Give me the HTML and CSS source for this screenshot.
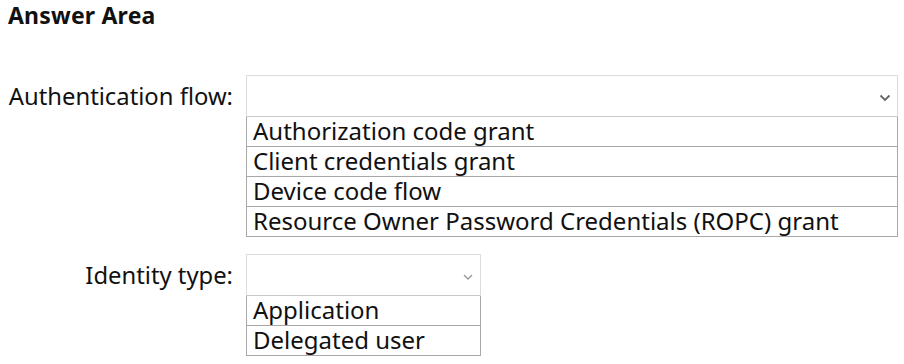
FILE: index.html
```html
<!DOCTYPE html>
<html lang="en">
<head>
  <meta charset="UTF-8">
  <title>Answer Area</title>
  <link rel="stylesheet" href="styles.css">
</head>
<body>
  <h1>Answer Area</h1>

  <div class="row row-flow">
    <div class="label">Authentication flow:</div>
    <div class="dropdown wide">
      <div class="head">
        <svg class="chevron" width="12" height="8" viewBox="0 0 12 8"><path d="M1.5 1.5 L6 6 L10.5 1.5" fill="none" stroke="#666" stroke-width="1.8"/></svg>
      </div>
      <ul class="options">
        <li>Authorization code grant</li>
        <li>Client credentials grant</li>
        <li>Device code flow</li>
        <li>Resource Owner Password Credentials (ROPC) grant</li>
      </ul>
    </div>
  </div>

  <div class="row row-identity">
    <div class="label">Identity type:</div>
    <div class="dropdown narrow">
      <div class="head">
        <svg class="chevron" width="12" height="8" viewBox="0 0 12 8"><path d="M2 2 L6 6 L10 2" fill="none" stroke="#999" stroke-width="1.3"/></svg>
      </div>
      <ul class="options">
        <li>Application</li>
        <li>Delegated user</li>
      </ul>
    </div>
  </div>
</body>
</html>
```

FILE: styles.css
```css
body {
  margin: 0;
  padding: 0 0 0 8px;
  background: #fff;
  font-family: "Noto Sans", "Open Sans", sans-serif;
  color: #111;
}
h1 {
  font-size: 23px;
  font-weight: bold;
  margin: 0;
  line-height: 31px;
  letter-spacing: 0.2px;
}
.row {
  display: flex;
  align-items: flex-start;
}
.row-flow {
  margin-top: 44px;
}
.row-identity {
  margin-top: 17px;
}
.label {
  width: 225px;
  text-align: right;
  font-size: 23.8px;
  line-height: 42px;
  margin-right: 13px;
  white-space: nowrap;
}
.dropdown {
  display: flex;
  flex-direction: column;
}
.wide {
  width: 652px;
}
.narrow {
  width: 235px;
}
.head {
  height: 40px;
  border: 1px solid #dcdcdc;
  border-bottom-color: #c8c8c8;
  display: flex;
  align-items: center;
  justify-content: flex-end;
  padding-right: 6px;
}
.chevron {
  margin-top: 4px;
}
.options {
  list-style: none;
  margin: 0;
  padding: 0;
  border: 1px solid #a8a8a8;
  border-top: none;
}
.options li {
  font-size: 24px;
  line-height: 27px;
  padding: 0 0 2px 6px;
  border-top: 1px solid #a8a8a8;
  white-space: nowrap;
}
.options li:first-child {
  border-top: none;
}
```
